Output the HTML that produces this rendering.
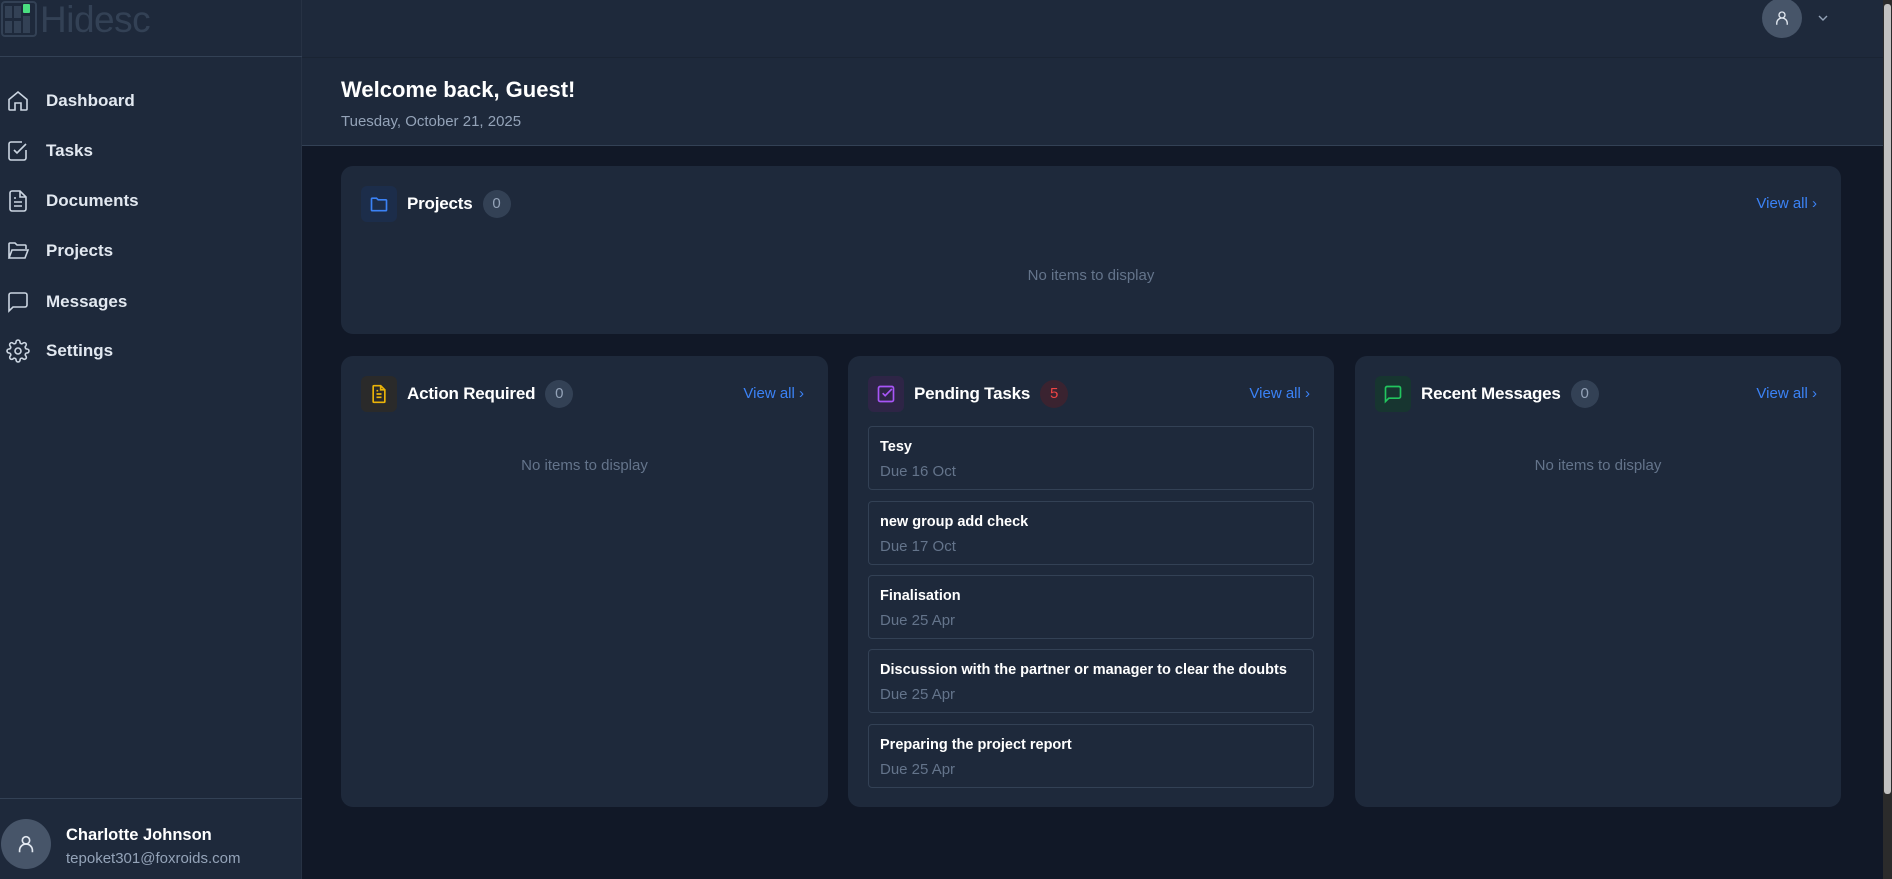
<!DOCTYPE html>
<html><head><meta charset="utf-8"><style>
*{box-sizing:border-box;margin:0;padding:0}
body{width:1892px;height:879px;overflow:hidden;background:#111827;font-family:"Liberation Sans",sans-serif;color:#f1f5f9;position:relative}
.side{position:absolute;left:0;top:0;width:302px;height:879px;background:#1e293b;border-right:1px solid #273244}
.logo{position:absolute;left:0;top:0;height:57px;width:302px;border-bottom:1px solid #334155}
.logo span{position:absolute;left:40px;top:-1px;font-size:37px;color:#334155;letter-spacing:-0.5px}
.nav{position:absolute;left:0;font-size:17px;color:#e2e8f0}
.nav svg{position:absolute;left:6px;width:24px;height:24px}
.nav b{position:absolute;left:46px;font-weight:600;white-space:nowrap}
.user{position:absolute;left:0;top:798px;width:302px;border-top:1px solid #334155;height:81px}
.av{position:absolute;border-radius:50%;background:#475569;display:flex;align-items:center;justify-content:center}
.top{position:absolute;left:302px;top:0;right:9px;height:58px;background:#1e293b;border-bottom:1px solid #1a2433}
.welcome{position:absolute;left:302px;top:58px;right:9px;height:88px;background:#1e293b;border-bottom:1px solid #334155}
.card{position:absolute;background:#1e293b;border-radius:12px}
.ib{position:absolute;left:20px;top:20px;width:36px;height:36px;border-radius:6px;display:flex;align-items:center;justify-content:center}
.hd{position:absolute;left:66px;top:24px;height:28px;display:flex;align-items:center;white-space:nowrap}
.ct{font-size:17px;font-weight:700;color:#fff;letter-spacing:-0.2px}
.badge{margin-left:10px;height:28px;min-width:28px;padding:0 8px;border-radius:14px;background:#334155;color:#94a3b8;font-size:15px;line-height:28px;text-align:center}
.va{position:absolute;right:24px;top:29px;color:#3b82f6;font-size:15px}
.empty{position:absolute;left:0;right:0;text-align:center;color:#64748b;font-size:15px}
.task{position:absolute;left:20px;right:20px;height:64px;border:1px solid #334155;border-radius:4px}
.task b{position:absolute;left:11px;top:12px;font-size:14.5px;color:#fff}
.task i{position:absolute;left:11px;top:36px;font-size:15px;color:#64748b;font-style:normal}
.scroll{position:absolute;right:0;top:0;width:9px;height:879px;background:#2b2b2b}
.scroll div{position:absolute;left:1px;top:4px;width:7px;height:790px;background:#c1c1c1;border-radius:3px}
</style></head><body>
<div class="side">
 <div class="logo">
  <svg style="position:absolute;left:1px;top:1px" width="36" height="36" viewBox="0 0 36 36"><rect x="1" y="1" width="34" height="34" rx="3" fill="none" stroke="#334155" stroke-width="2"/><rect x="4" y="5" width="7" height="12" fill="#334155"/><rect x="13" y="5" width="7" height="12" fill="#334155"/><rect x="22" y="3" width="7" height="9" rx="1" fill="#4ade80"/><rect x="4" y="20" width="7" height="12" fill="#334155"/><rect x="13" y="20" width="7" height="12" fill="#334155"/><rect x="22" y="15" width="7" height="17" fill="#334155"/></svg>
  <span>Hidesc</span></div>
 <div class="nav" style="top:101px"><svg viewBox="0 0 24 24" fill="none" stroke="#cbd5e1" stroke-width="1.6" style="top:-12px"><path d="M3 10.5 12 3l9 7.5V20a1 1 0 0 1-1 1h-5v-7H9v7H4a1 1 0 0 1-1-1z"/></svg><b style="top:-10px">Dashboard</b></div>
 <div class="nav" style="top:151px"><svg viewBox="0 0 24 24" fill="none" stroke="#cbd5e1" stroke-width="1.6" style="top:-12px"><path d="M20 11v8a2 2 0 0 1-2 2H5a2 2 0 0 1-2-2V5a2 2 0 0 1 2-2h11"/><path d="m8 11 3 3 9-9"/></svg><b style="top:-10px">Tasks</b></div>
 <div class="nav" style="top:201px"><svg viewBox="0 0 24 24" fill="none" stroke="#cbd5e1" stroke-width="1.6" style="top:-12px"><path d="M14 2H6a2 2 0 0 0-2 2v16a2 2 0 0 0 2 2h12a2 2 0 0 0 2-2V8z"/><path d="M14 2v6h6M8 13h8M8 17h8M8 9h2"/></svg><b style="top:-10px">Documents</b></div>
 <div class="nav" style="top:251px"><svg viewBox="0 0 24 24" fill="none" stroke="#cbd5e1" stroke-width="1.6" style="top:-12px"><path d="M3 19V5a1 1 0 0 1 1-1h5l2 2h8a1 1 0 0 1 1 1v3M3 19l3-8h16l-3 8z"/></svg><b style="top:-10px">Projects</b></div>
 <div class="nav" style="top:302px"><svg viewBox="0 0 24 24" fill="none" stroke="#cbd5e1" stroke-width="1.6" style="top:-12px"><path d="M21 15a2 2 0 0 1-2 2H7l-4 4V5a2 2 0 0 1 2-2h14a2 2 0 0 1 2 2z"/></svg><b style="top:-10px">Messages</b></div>
 <div class="nav" style="top:351px"><svg viewBox="0 0 24 24" fill="none" stroke="#cbd5e1" stroke-width="1.6" style="top:-12px"><circle cx="12" cy="12" r="3"/><path d="M19.4 15a1.65 1.65 0 0 0 .33 1.820l.06.06a2 2 0 1 1-2.830 2.830l-.06-.06a1.65 1.65 0 0 0-1.820-.33 1.65 1.65 0 0 0-1 1.510V21a2 2 0 1 1-4 0v-.09A1.65 1.65 0 0 0 9 19.4a1.65 1.65 0 0 0-1.820.33l-.06.06a2 2 0 1 1-2.830-2.830l.06-.06A1.65 1.65 0 0 0 4.6 15a1.65 1.65 0 0 0-1.510-1H3a2 2 0 1 1 0-4h.09A1.65 1.65 0 0 0 4.6 9a1.65 1.65 0 0 0-.33-1.820l-.06-.06a2 2 0 1 1 2.830-2.830l.06.06A1.65 1.65 0 0 0 9 4.6a1.65 1.65 0 0 0 1-1.510V3a2 2 0 1 1 4 0v.09a1.65 1.65 0 0 0 1 1.510 1.65 1.65 0 0 0 1.820-.33l.06-.06a2 2 0 1 1 2.830 2.830l-.06.06A1.65 1.65 0 0 0 19.4 9a1.65 1.65 0 0 0 1.510 1H21a2 2 0 1 1 0 4h-.09a1.65 1.65 0 0 0-1.510 1z"/></svg><b style="top:-10px">Settings</b></div>
 <div class="user">
  <div class="av" style="left:1px;top:20px;width:50px;height:50px"><svg width="22" height="22" viewBox="0 0 24 24" fill="none" stroke="#e2e8f0" stroke-width="1.8"><circle cx="12" cy="8" r="4"/><path d="M5 21v-2a6 6 0 0 1 14 0v2"/></svg></div>
  <div style="position:absolute;left:66px;top:27px;font-size:16.5px;font-weight:700;color:#fff">Charlotte Johnson</div>
  <div style="position:absolute;left:66px;top:51px;font-size:15px;color:#94a3b8">tepoket301@foxroids.com</div>
 </div>
</div>
<div class="top">
 <div class="av" style="left:1460px;top:-2px;width:40px;height:40px"><svg width="18" height="18" viewBox="0 0 24 24" fill="none" stroke="#e2e8f0" stroke-width="1.8"><circle cx="12" cy="8" r="4"/><path d="M5 21v-2a6 6 0 0 1 14 0v2"/></svg></div>
 <svg style="position:absolute;left:1514px;top:11px" width="14" height="14" viewBox="0 0 14 14" fill="none" stroke="#94a3b8" stroke-width="1.4"><path d="m3 5 4 4 4-4"/></svg>
</div>
<div class="welcome">
 <div style="position:absolute;left:39px;top:19px;font-size:22px;font-weight:700;color:#fff">Welcome back, Guest!</div>
 <div style="position:absolute;left:39px;top:55px;font-size:15px;color:#94a3b8">Tuesday, October 21, 2025</div>
</div>

<div class="card" style="left:341px;top:166px;width:1500px;height:168px">
 <div class="ib" style="background:#1c2d4a"><svg width="20" height="20" viewBox="0 0 24 24" fill="none" stroke="#3b82f6" stroke-width="2"><path d="M3 19V6a1 1 0 0 1 1-1h5l2 2h9a1 1 0 0 1 1 1v11a1 1 0 0 1-1 1H4a1 1 0 0 1-1-1z"/></svg></div>
 <div class="hd"><span class="ct">Projects</span><span class="badge">0</span></div>
 <div class="va">View all ›</div>
 <div class="empty" style="top:101px">No items to display</div>
</div>

<div class="card" style="left:341px;top:356px;width:487px;height:451px">
 <div class="ib" style="background:#2a2a2a"><svg width="20" height="20" viewBox="0 0 24 24" fill="none" stroke="#eab308" stroke-width="2"><path d="M14 2H6a1 1 0 0 0-1 1v18a1 1 0 0 0 1 1h12a1 1 0 0 0 1-1V7z"/><path d="M14 2v5h5M9 12h6M9 16h6M9 8h2"/></svg></div>
 <div class="hd"><span class="ct">Action Required</span><span class="badge">0</span></div>
 <div class="va">View all ›</div>
 <div class="empty" style="top:101px">No items to display</div>
</div>

<div class="card" style="left:848px;top:356px;width:486px;height:451px">
 <div class="ib" style="background:#2e2546"><svg width="20" height="20" viewBox="0 0 24 24" fill="none" stroke="#a855f7" stroke-width="2"><rect x="3" y="3" width="18" height="18" rx="2"/><path d="m8 11 3 3 8-8"/></svg></div>
 <div class="hd"><span class="ct">Pending Tasks</span><span class="badge" style="background:#3a2330;color:#ef4444">5</span></div>
 <div class="va">View all ›</div>
 <div class="task" style="top:70px"><b>Tesy</b><i>Due 16 Oct</i></div>
 <div class="task" style="top:145px"><b>new group add check</b><i>Due 17 Oct</i></div>
 <div class="task" style="top:219px"><b>Finalisation</b><i>Due 25 Apr</i></div>
 <div class="task" style="top:293px"><b>Discussion with the partner or manager to clear the doubts</b><i>Due 25 Apr</i></div>
 <div class="task" style="top:368px"><b>Preparing the project report</b><i>Due 25 Apr</i></div>
</div>

<div class="card" style="left:1355px;top:356px;width:486px;height:451px">
 <div class="ib" style="background:#173530"><svg width="20" height="20" viewBox="0 0 24 24" fill="none" stroke="#22c55e" stroke-width="2"><path d="M21 15a2 2 0 0 1-2 2H7l-4 4V5a2 2 0 0 1 2-2h14a2 2 0 0 1 2 2z"/></svg></div>
 <div class="hd"><span class="ct">Recent Messages</span><span class="badge">0</span></div>
 <div class="va">View all ›</div>
 <div class="empty" style="top:101px">No items to display</div>
</div>
<div class="scroll"><div></div></div>
</body></html>
